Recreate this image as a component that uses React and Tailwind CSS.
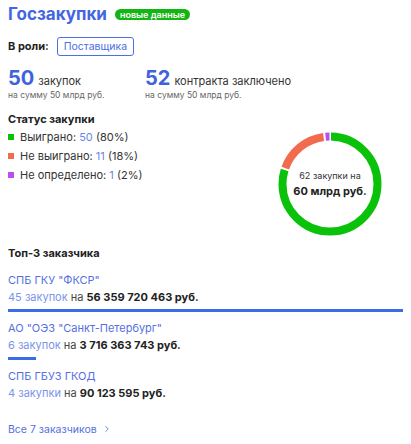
import { ChevronRight } from 'lucide-react'

const STATUS = [
  { label: 'Выиграно:', count: 50, pct: '80%', color: 'bg-[#0ac20a]', stroke: '#0ac20a', frac: 0.8 },
  { label: 'Не выиграно:', count: 11, pct: '18%', color: 'bg-[#f26b4f]', stroke: '#f26b4f', frac: 0.18 },
  { label: 'Не определено:', count: 1, pct: '2%', color: 'bg-[#b94ef2]', stroke: '#b94ef2', frac: 0.02 },
]

const CUSTOMERS = [
  { name: 'СПБ ГКУ "ФКСР"', count: '45 закупок', sum: '56 359 720 463 руб.', value: 56359720463 },
  { name: 'АО "ОЭЗ "Санкт-Петербург"', count: '6 закупок', sum: '3 716 363 743 руб.', value: 3716363743 },
  { name: 'СПБ ГБУЗ ГКОД', count: '4 закупки', sum: '90 123 595 руб.', value: 90123595 },
]

// ── Donut ─────────────────────────────────────────────────────────────────────
function Donut() {
  const r = 47.5
  const c = 2 * Math.PI * r
  const gap = 2
  let acc = 0
  return (
    <div className="relative h-[104px] w-[104px]">
      <svg viewBox="0 0 104 104" className="h-full w-full -rotate-90">
        {STATUS.map((s) => {
          const len = s.frac * c
          const off = acc
          acc += len
          return (
            <circle
              key={s.label}
              cx="52" cy="52" r={r}
              fill="none"
              stroke={s.stroke}
              strokeWidth="8"
              strokeDasharray={`${len - gap} ${c - len + gap}`}
              strokeDashoffset={-(off + gap / 2)}
            />
          )
        })}
      </svg>
      <div className="absolute inset-0 flex flex-col items-center justify-center text-center">
        <span className="text-[9px] leading-[12px] text-[#333]">62 закупки на</span>
        <span className="mt-[3px] text-[11px] font-bold leading-[13px] text-[#222]">60 млрд руб.</span>
      </div>
    </div>
  )
}

export default function App() {
  const max = CUSTOMERS[0].value
  return (
    <div className="w-[411px] bg-white px-2 pt-[3px] font-['Inter',sans-serif] text-[#222]">
      {/* Header */}
      <div className="flex items-center gap-[8px]">
        <h2 className="text-[17px] font-bold leading-[22px] text-[#4466e0]">Госзакупки</h2>
        <span className="mt-[1px] rounded-full bg-[#12b512] px-[5px] text-[9px] font-semibold leading-[11px] text-white">новые данные</span>
      </div>

      {/* Role */}
      <div className="mt-[12px] flex items-center gap-[8px]">
        <span className="text-[11px] font-bold">В роли:</span>
        <span className="rounded-[3px] border border-[#4a6fe6] px-[6px] py-[2px] text-[10.5px] leading-[13px] text-[#4a6fe6]">Поставщика</span>
      </div>

      {/* KPIs */}
      <div className="mt-[12px] grid grid-cols-[137px_1fr]">
        <div>
          <div className="flex items-baseline gap-[4px]">
            <span className="text-[20px] font-bold leading-[20px] text-[#3e63dd]">50</span>
            <span className="text-[11px] text-[#333]">закупок</span>
          </div>
          <p className="text-[8.5px] leading-[10px] text-[#666]">на сумму 50 млрд руб.</p>
        </div>
        <div>
          <div className="flex items-baseline gap-[4px]">
            <span className="text-[20px] font-bold leading-[20px] text-[#3e63dd]">52</span>
            <span className="text-[11px] text-[#333]">контракта заключено</span>
          </div>
          <p className="text-[8.5px] leading-[10px] text-[#666]">на сумму 50 млрд руб.</p>
        </div>
      </div>

      {/* Status */}
      <div className="mt-[12px] flex">
        <div className="w-[270px]">
          <h3 className="text-[11px] font-bold leading-[14px]">Статус закупки</h3>
          <ul className="mt-[4px] space-y-[5px]">
            {STATUS.map((s) => (
              <li key={s.label} className="flex items-center gap-[6px] text-[11px] leading-[14px] text-[#333]">
                <span className={`h-[6px] w-[6px] ${s.color}`} />
                <span>
                  {s.label} <span className="text-[#6a85e8]">{s.count}</span> ({s.pct})
                </span>
              </li>
            ))}
          </ul>
        </div>
        <div className="mt-[20px]">
          <Donut />
        </div>
      </div>

      {/* Top customers */}
      <h3 className="mt-[10px] text-[11px] font-bold leading-[14px]">Топ-3 заказчика</h3>
      <div className="mt-[13px]">
        {CUSTOMERS.map((cu) => {
          const w = Math.round((cu.value / max) * 100)
          return (
            <div key={cu.name} className="mb-[9px]">
              <p className="text-[11px] leading-[14px] text-[#5470e0]">{cu.name}</p>
              <p className="mt-[3px] text-[11px] leading-[14px]">
                <span className="text-[#7c93ea]">{cu.count}</span> <span className="text-[#444]">на</span>{' '}
                <span className="font-bold text-[#222]">{cu.sum}</span>
              </p>
              <div className="mt-[5px] h-[3px]">
                <div className="h-[3px] bg-[#3a6ce8]" style={{ width: `${w}%` }} />
              </div>
            </div>
          )
        })}
      </div>

      <a className="mt-[14px] flex items-center gap-[5px] pb-[10px] text-[10.5px] text-[#5470e0]">
        Все 7 заказчиков <ChevronRight className="h-[10px] w-[10px]" strokeWidth={2} />
      </a>
    </div>
  )
}
